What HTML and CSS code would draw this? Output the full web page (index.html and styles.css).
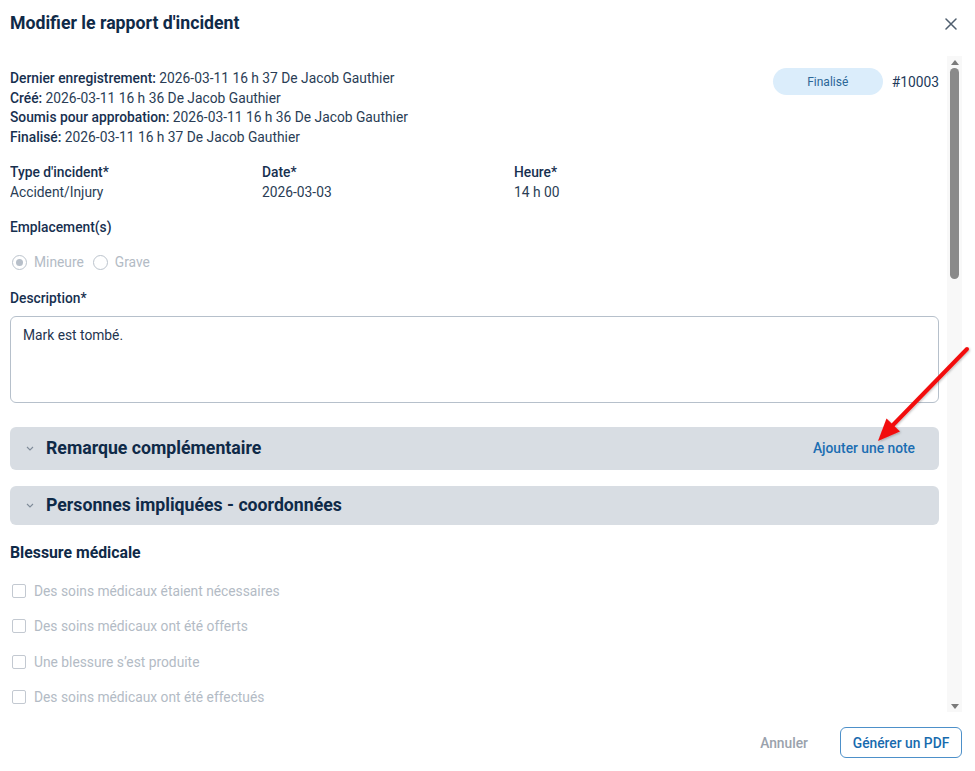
FILE: index.html
```html
<!DOCTYPE html>
<html lang="fr">
<head>
<meta charset="utf-8">
<title>Modifier le rapport d'incident</title>
<link rel="stylesheet" href="styles.css">
</head>
<body>
<div class="modal">
  <header class="modal-header">
    <h1 class="modal-title">Modifier le rapport d'incident</h1>
    <button class="close-btn" aria-label="Fermer">
      <svg width="12" height="12" viewBox="0 0 12 12"><path d="M1 1 L11 11 M11 1 L1 11" stroke="#4f5e6e" stroke-width="1.5" fill="none" stroke-linecap="round"/></svg>
    </button>
  </header>

  <div class="modal-body">
    <div class="scroll-content">
      <div class="top-row">
        <div class="meta">
          <div><span class="meta-label">Dernier enregistrement:</span> 2026-03-11 16 h 37 De Jacob Gauthier</div>
          <div><span class="meta-label">Créé:</span> 2026-03-11 16 h 36 De Jacob Gauthier</div>
          <div><span class="meta-label">Soumis pour approbation:</span> 2026-03-11 16 h 36 De Jacob Gauthier</div>
          <div><span class="meta-label">Finalisé:</span> 2026-03-11 16 h 37 De Jacob Gauthier</div>
        </div>
        <div class="status">
          <span class="badge">Finalisé</span>
          <span class="report-id">#10003</span>
        </div>
      </div>

      <div class="fields">
        <div class="field">
          <div class="label">Type d'incident*</div>
          <div class="value">Accident/Injury</div>
        </div>
        <div class="field">
          <div class="label">Date*</div>
          <div class="value">2026-03-03</div>
        </div>
        <div class="field">
          <div class="label">Heure*</div>
          <div class="value">14 h 00</div>
        </div>
      </div>

      <div class="label block-label">Emplacement(s)</div>

      <div class="radios">
        <label class="radio"><span class="radio-dot checked"></span>Mineure</label>
        <label class="radio"><span class="radio-dot"></span>Grave</label>
      </div>

      <div class="label desc-label">Description*</div>
      <div class="textarea">Mark est tombé.</div>

      <section class="accordion first">
        <div class="acc-head">
          <svg class="chev" width="8" height="5" viewBox="0 0 8 5"><path d="M1 1 L4 4 L7 1" stroke="#7f8b99" stroke-width="1.1" fill="none"/></svg>
          <span class="acc-title">Remarque complémentaire</span>
          <button class="acc-action">Ajouter une note</button>
        </div>
      </section>

      <section class="accordion">
        <div class="acc-head">
          <svg class="chev" width="8" height="5" viewBox="0 0 8 5"><path d="M1 1 L4 4 L7 1" stroke="#7f8b99" stroke-width="1.1" fill="none"/></svg>
          <span class="acc-title">Personnes impliquées - coordonnées</span>
        </div>
      </section>

      <h2 class="section-title">Blessure médicale</h2>
      <div class="checks">
        <label class="check"><span class="box"></span>Des soins médicaux étaient nécessaires</label>
        <label class="check"><span class="box"></span>Des soins médicaux ont été offerts</label>
        <label class="check"><span class="box"></span>Une blessure s’est produite</label>
        <label class="check"><span class="box"></span>Des soins médicaux ont été effectués</label>
      </div>
    </div>

    <div class="scrollbar" aria-hidden="true">
      <div class="sb-btn">
        <svg width="8" height="5" viewBox="0 0 8 5"><polygon points="0,5 8,5 4,0" fill="#7a7a7a"/></svg>
      </div>
      <div class="sb-track">
        <div class="sb-thumb"></div>
      </div>
      <div class="sb-btn">
        <svg width="8" height="5" viewBox="0 0 8 5"><polygon points="0,0 8,0 4,5" fill="#7a7a7a"/></svg>
      </div>
    </div>
  </div>

  <footer class="modal-footer">
    <button class="btn-text">Annuler</button>
    <button class="btn-outline">Générer un PDF</button>
  </footer>
</div>

<svg class="annotation" width="975" height="771" viewBox="0 0 975 771">
  <defs>
    <filter id="sh" x="-10%" y="-10%" width="130%" height="130%">
      <feDropShadow dx="1" dy="1" stdDeviation="1" flood-color="#000" flood-opacity="0.25"/>
    </filter>
  </defs>
  <g filter="url(#sh)">
    <line x1="967" y1="349" x2="893" y2="425" stroke="#f20d0d" stroke-width="4" stroke-linecap="round"/>
    <polygon points="878,441 886.5,418.5 900,431.5" fill="#f20d0d"/>
  </g>
</svg>
</body>
</html>
```

FILE: styles.css
```css
* { box-sizing: border-box; }

html, body {
  margin: 0;
  padding: 0;
  background: #ffffff;
}

body {
  font-family: Roboto, "Noto Sans", Arial, sans-serif;
  color: #1f3550;
  font-size: 13.8px;
}

.modal {
  width: 975px;
  height: 771px;
  display: flex;
  flex-direction: column;
  padding: 0 13px 0 10px;
  background: #fff;
}

.modal-header {
  height: 56px;
  flex: none;
  display: flex;
  justify-content: space-between;
  align-items: flex-start;
  padding-top: 12px;
}

.modal-title {
  margin: 0;
  font-size: 17.7px;
  line-height: 22px;
  font-weight: 700;
  color: #0f2a48;
}

.close-btn {
  border: 0;
  background: none;
  padding: 0;
  margin: 6px 5px 0 0;
  width: 12px;
  height: 12px;
  display: flex;
  cursor: pointer;
}

.modal-body {
  flex: 1;
  min-height: 0;
  display: flex;
  gap: 8px;
}

.scroll-content {
  flex: 1;
  min-width: 0;
  overflow: hidden;
  padding-top: 13px;
}

.scrollbar {
  width: 15px;
  flex: none;
  background: #f8f8f8;
  display: flex;
  flex-direction: column;
}

.sb-btn {
  height: 12px;
  display: flex;
  align-items: center;
  justify-content: center;
  flex: none;
}

.sb-track {
  flex: 1;
  padding: 0 3px;
}

.sb-thumb {
  height: 211px;
  background: #8a8a8a;
  border-radius: 5px;
}

.top-row {
  display: flex;
  justify-content: space-between;
  align-items: flex-start;
}

.meta {
  line-height: 19.6px;
  color: #2a3d55;
}

.meta-label {
  font-weight: 500;
  color: #17304f;
}

.status {
  display: flex;
  align-items: center;
  gap: 9px;
  margin-top: -1px;
}

.badge {
  width: 110px;
  height: 27px;
  border-radius: 14px;
  background: #dbedfb;
  color: #2c6797;
  font-size: 12px;
  display: flex;
  align-items: center;
  justify-content: center;
}

.report-id {
  color: #22395a;
}

.fields {
  display: grid;
  grid-template-columns: 252px 252px 252px;
  margin-top: 16px;
  line-height: 19.6px;
}

.label {
  font-weight: 500;
  color: #17304f;
  line-height: 19.6px;
}

.value {
  color: #2a3d55;
}

.block-label {
  margin-top: 15px;
}

.radios {
  display: flex;
  gap: 9px;
  margin-top: 15px;
  height: 20px;
  align-items: center;
}

.radio {
  display: flex;
  align-items: center;
  gap: 7px;
  color: #b3bbc5;
  margin-left: 2px;
}

.radio + .radio { margin-left: 0; }

.radio-dot {
  width: 15px;
  height: 15px;
  border-radius: 50%;
  border: 1.5px solid #bcc4cd;
  display: flex;
  align-items: center;
  justify-content: center;
}

.radio-dot.checked::after {
  content: "";
  width: 7px;
  height: 7px;
  border-radius: 50%;
  background: #b7bfc9;
}

.desc-label {
  margin-top: 17px;
}

.textarea {
  margin-top: 7px;
  height: 87px;
  border: 1px solid #b6c0cb;
  border-radius: 6px;
  padding: 8px 12px;
  line-height: 20px;
  color: #1f3550;
}

.accordion {
  background: #d8dde3;
  border-radius: 6px;
  margin-top: 16px;
}

.accordion.first {
  margin-top: 24px;
}

.acc-head {
  display: flex;
  align-items: center;
  padding: 0 24px 0 16px;
  min-height: 39px;
}

.chev {
  flex: none;
  margin-right: 12px;
  margin-top: 1px;
}

.acc-title {
  font-size: 17.7px;
  font-weight: 700;
  color: #0f2a48;
  line-height: 39px;
  flex: 1;
}

.acc-action {
  border: 0;
  background: none;
  font-family: inherit;
  font-size: 13.8px;
  font-weight: 500;
  color: #1b6db2;
  padding: 12px 0;
  line-height: 19px;
  cursor: pointer;
}

.section-title {
  margin: 18px 0 0;
  font-size: 15.8px;
  line-height: 20px;
  font-weight: 700;
  color: #0f2a48;
}

.checks {
  display: flex;
  flex-direction: column;
  gap: 15.5px;
  margin-top: 18px;
}

.check {
  display: flex;
  align-items: center;
  gap: 8px;
  height: 20px;
  color: #b3bbc5;
  padding-left: 2px;
}

.box {
  width: 14px;
  height: 14px;
  border: 1.5px solid #c3c9d1;
  border-radius: 2px;
  flex: none;
}

.modal-footer {
  height: 59px;
  flex: none;
  display: flex;
  justify-content: flex-end;
  align-items: flex-start;
  padding-top: 15px;
  gap: 16px;
}

.btn-text {
  border: 0;
  background: none;
  font-family: inherit;
  font-size: 13.8px;
  font-weight: 500;
  color: #9aa2ac;
  height: 31px;
  padding: 0 16px;
  cursor: pointer;
}

.btn-outline {
  border: 1px solid #4d90c9;
  background: #fff;
  border-radius: 6px;
  font-family: inherit;
  font-size: 13.8px;
  font-weight: 500;
  color: #176aae;
  height: 31px;
  width: 122px;
  padding: 0;
  cursor: pointer;
}

.annotation {
  position: absolute;
  top: 0;
  left: 0;
  pointer-events: none;
}
```
